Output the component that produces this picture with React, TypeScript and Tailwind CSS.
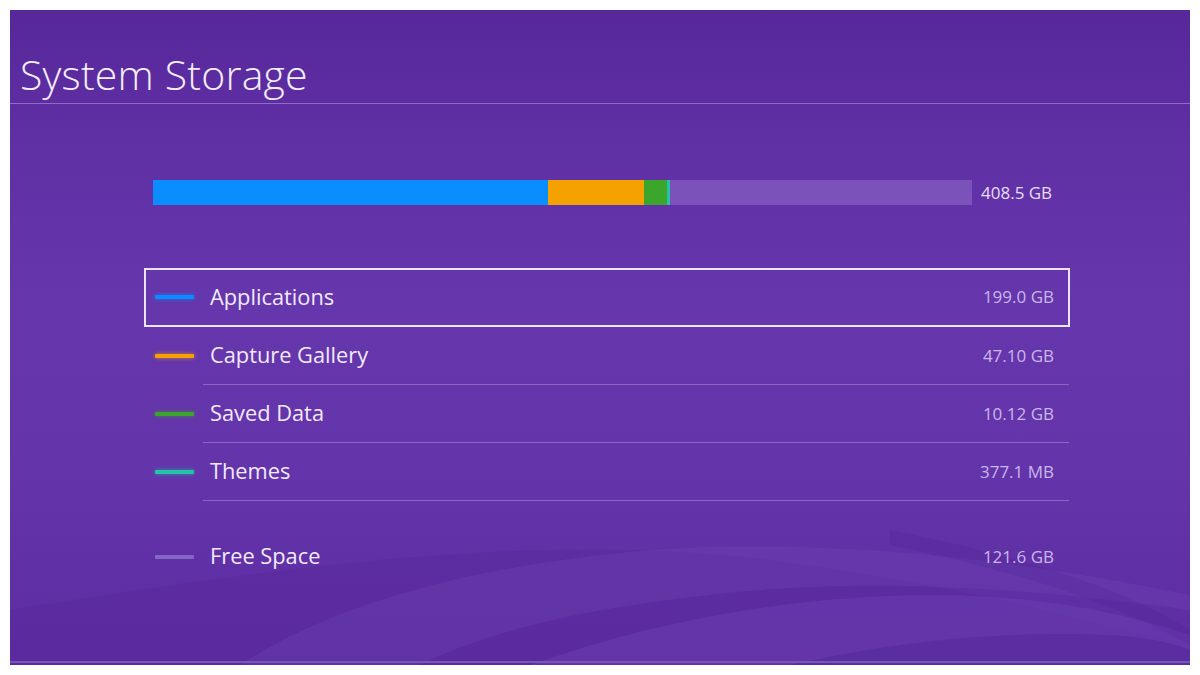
const segments = [
  { color: 'bg-[#0a8eff]', width: 395 },
  { color: 'bg-[#f5a100]', width: 96 },
  { color: 'bg-[#3ca52b]', width: 23 },
  { color: 'bg-[#22c3a6]', width: 3 },
];

const rows = [
  { label: 'Applications', value: '199.0 GB', swatch: 'bg-[#0a8eff] shadow-[0_0_4px_rgba(10,142,255,0.8)]' },
  { label: 'Capture Gallery', value: '47.10 GB', swatch: 'bg-[#f5a100] shadow-[0_0_4px_rgba(245,161,0,0.7)]' },
  { label: 'Saved Data', value: '10.12 GB', swatch: 'bg-[#3ca52b] shadow-[0_0_4px_rgba(60,165,43,0.7)]' },
  { label: 'Themes', value: '377.1 MB', swatch: 'bg-[#22c3a6] shadow-[0_0_4px_rgba(34,195,166,0.7)]' },
];

function Row({ label, value, swatch, selected = false, divider = true }: { label: string; value: string; swatch: string; selected?: boolean; divider?: boolean }) {
  return (
    <div
      className={
        'relative flex items-center ' +
        (selected ? 'h-[59px] border-2 border-[#ece4f8] pl-[9px] pr-[14px]' : 'h-[58px] pl-[11px] pr-[16px]')
      }
    >
      <div className={'h-[4px] w-[39px] rounded-[1px] ' + swatch} />
      <span className="ml-[16px] text-[21.8px] font-normal text-[#f1eafb]">{label}</span>
      <span className="ml-auto text-[17px] text-[#c9b7ea]">{value}</span>
      {divider && !selected && (
        <div className="absolute bottom-0 left-[59px] right-[1px] h-px bg-[#8a66c6]" />
      )}
    </div>
  );
}

export default function App() {
  return (
    <div className="h-[675px] w-[1200px] bg-white p-[10px] font-['Open_Sans','Noto_Sans',sans-serif]">
      <div className="relative h-[655px] w-[1180px] overflow-hidden bg-[linear-gradient(180deg,#57289a_0%,#5f2fa4_20%,#6636ad_45%,#6434ab_70%,#5c2ca1_100%)]">
        <svg className="absolute inset-0" width="1180" height="655" viewBox="0 0 1180 655">
          <path d="M0 600 C 250 560, 520 520, 760 550 C 950 575, 1080 610, 1180 640 L1180 655 L0 655 Z" fill="#58289b" opacity="0.45" />
          <path d="M230 655 C 330 590, 470 555, 640 540 C 820 528, 1000 548, 1180 585 L1180 600 C 1000 575, 840 568, 700 585 C 560 600, 470 625, 410 655 Z" fill="#7048b6" opacity="0.3" />
          <path d="M520 655 C 640 612, 780 585, 930 585 C 1040 586, 1120 605, 1180 625 L1180 655 Z" fill="#6c40b4" opacity="0.5" />
          <path d="M780 655 C 880 632, 990 620, 1100 625 C 1140 627, 1165 634, 1180 640 L1180 655 Z" fill="#53289a" opacity="0.55" />
          <path d="M880 520 C 980 540, 1100 570, 1180 620 L1180 635 C 1100 590, 1000 560, 880 535 Z" fill="#4f2595" opacity="0.25" />
        </svg>

        <div className="relative flex h-[94px] items-end border-b border-[#8d6bc9] pb-[8px] pl-[10px]">
          <h1 className="text-[41px] font-light leading-none tracking-[0.2px] text-[#f3eefb]">System Storage</h1>
        </div>

        <div className="relative pl-[143px] pt-[76px]">
          <div className="flex items-center">
            <div className="flex h-[25px] w-[819px] bg-[#7a52ba]">
              {segments.map((s, i) => (
                <div key={i} className={'h-full ' + s.color} style={{ width: s.width }} />
              ))}
            </div>
            <span className="ml-[9px] text-[17px] text-[#e8def6]">408.5 GB</span>
          </div>
        </div>

        <div className="relative ml-[134px] mt-[62px] w-[926px]">
          {rows.map((r, i) => (
            <Row key={r.label} {...r} selected={i === 0} />
          ))}
          <div className="mt-[27px]">
            <Row label="Free Space" value="121.6 GB" swatch="bg-[#8566c2]" divider={false} />
          </div>
        </div>

        <div className="absolute bottom-[2px] left-0 right-0 h-[2px] bg-[#7a55b8]" />
      </div>
    </div>
  );
}
